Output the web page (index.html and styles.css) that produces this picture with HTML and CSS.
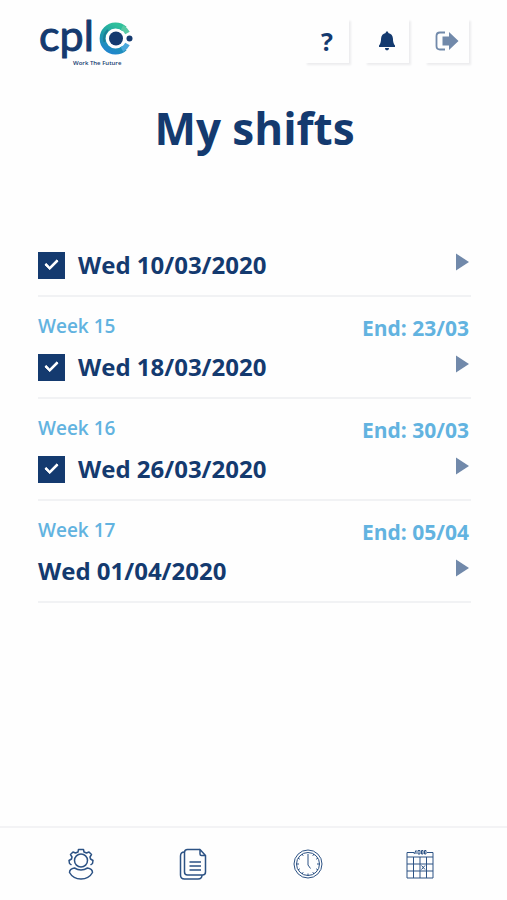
FILE: index.html
```html
<!DOCTYPE html>
<html lang="en">
<head>
<meta charset="utf-8">
<meta name="viewport" content="width=device-width, initial-scale=1">
<title>My shifts</title>
<link rel="stylesheet" href="styles.css">
</head>
<body>
<header class="topbar">
  <a class="logo" href="#" aria-label="cpl home">
    <svg width="96" height="64" viewBox="0 0 96 64">
      <defs>
        <linearGradient id="ring" x1="0.7" y1="0" x2="0.3" y2="1">
          <stop offset="0" stop-color="#2fc09b"/>
          <stop offset="0.5" stop-color="#1c9ba8"/>
          <stop offset="1" stop-color="#2086cc"/>
        </linearGradient>
      </defs>
      <text class="logo-name" x="1" y="47">cpl</text>
      <text class="logo-tag" x="35" y="61">Work The Future</text>
      <g transform="translate(0 1)">
        <path d="M86.500 24A13 13 0 1 0 86.500 43" fill="none" stroke="url(#ring)" stroke-width="6"/>
        <path d="M70 25A12 12 0 0 0 66.500 37" fill="none" stroke="#1a7f96" stroke-width="2"/>
        <path d="M84 22.500A13 13 0 0 1 89.500 28" fill="none" stroke="#58c9a4" stroke-width="5"/>
        <path d="M89.500 39A13 13 0 0 1 84 44.500" fill="none" stroke="#4ba8dc" stroke-width="5"/>
        <circle cx="78" cy="33.500" r="9.500" fill="#fefefe"/>
        <circle cx="78" cy="33.500" r="7" fill="#143a6f"/>
        <circle cx="91.500" cy="33.500" r="4.500" fill="#fefefe"/>
        <circle cx="91.500" cy="33.500" r="3" fill="#143a6f"/>
      </g>
    </svg>
  </a>
  <div class="actions">
    <button class="action" type="button">?</button>
    <button class="action" type="button" aria-label="Notifications">
      <svg width="18" height="20" viewBox="0 0 18 20" fill="currentColor">
        <path d="M9 0.500C8.200 0.500 7.700 1 7.700 1.900C5 2.500 3.200 4.500 3.100 7.200C3 11 2.500 12.600 1 14.500V16H17V14.500C15.500 12.600 15 11 14.900 7.200C14.800 4.500 13 2.500 10.300 1.900C10.300 1 9.800 0.500 9 0.500ZM7 17H11C11 18.400 10.200 19.300 9 19.300S7 18.400 7 17Z"/>
      </svg>
    </button>
    <button class="action action-muted" type="button" aria-label="Log out">
      <svg width="24" height="20" viewBox="0 0 24 20">
        <path d="M10 1.500H5C2.800 1.500 1.500 2.800 1.500 5V15C1.500 17.200 2.800 18.500 5 18.500H10" fill="none" stroke="currentColor" stroke-width="1.800"/>
        <path d="M7.500 5.500H14V1L23.500 10L14 19V14.500H7.500Z" fill="currentColor"/>
      </svg>
    </button>
  </div>
</header>

<main class="content">
  <h1 class="title">My shifts</h1>
  <ul class="shifts">
    <li class="shift">
      <div class="entry">
        <label class="day"><input class="check" type="checkbox" checked>Wed 10/03/2020</label>
        <button class="open" type="button" aria-label="Open shift"><svg width="14" height="18" viewBox="0 0 14 18"><path d="M1 0.500L14 9L1 17.500Z" fill="currentColor"/></svg></button>
      </div>
    </li>
    <li class="shift">
      <div class="meta"><span class="week">Week 15</span><span class="end">End: 23/03</span></div>
      <div class="entry">
        <label class="day"><input class="check" type="checkbox" checked>Wed 18/03/2020</label>
        <button class="open" type="button" aria-label="Open shift"><svg width="14" height="18" viewBox="0 0 14 18"><path d="M1 0.500L14 9L1 17.500Z" fill="currentColor"/></svg></button>
      </div>
    </li>
    <li class="shift">
      <div class="meta"><span class="week">Week 16</span><span class="end">End: 30/03</span></div>
      <div class="entry">
        <label class="day"><input class="check" type="checkbox" checked>Wed 26/03/2020</label>
        <button class="open" type="button" aria-label="Open shift"><svg width="14" height="18" viewBox="0 0 14 18"><path d="M1 0.500L14 9L1 17.500Z" fill="currentColor"/></svg></button>
      </div>
    </li>
    <li class="shift">
      <div class="meta"><span class="week">Week 17</span><span class="end">End: 05/04</span></div>
      <div class="entry">
        <span class="day">Wed 01/04/2020</span>
        <button class="open" type="button" aria-label="Open shift"><svg width="14" height="18" viewBox="0 0 14 18"><path d="M1 0.500L14 9L1 17.500Z" fill="currentColor"/></svg></button>
      </div>
    </li>
  </ul>
</main>

<nav class="tabs" aria-label="Main">
  <a class="tab" href="#" aria-label="Profile">
    <svg width="32" height="32" viewBox="0 0 32 32">
      <circle cx="16" cy="12.500" r="6.500"/>
      <path d="M6.500 17L4.500 15.500L4 12.500L6.500 11L7 9L5.500 6.500L8 4L10.500 5L13 4L13.500 1.500H18.500L19 4L21.500 5L24 4L26.500 6.500L25 9L25.500 11L28 12.500L27.500 15.500L25.500 17"/>
      <path d="M9.500 20C6.500 20.500 4.500 22.500 4.500 24.500C7 29 11 31 16 31S25 29 27.500 24.500C27.500 22.500 25.500 20.500 22.500 20C18.500 22.500 13.500 22.500 9.500 20Z"/>
    </svg>
  </a>
  <a class="tab" href="#" aria-label="Documents">
    <svg width="32" height="32" viewBox="0 0 32 32">
      <path d="M22 1.500H9.500C7.500 1.500 6.500 2.500 6.500 4.500V24C6.500 26 7.500 27 9.500 27H24.500C26.500 27 27.500 26 27.500 24V7.500L22 1.500V6C22 7.200 22.500 7.500 23.500 7.500H27.500"/>
      <path d="M6.500 4C3.500 4 2.500 5 2.500 8V27C2.500 30 3.500 31 6.500 31H20C23 31 24 30 24 27"/>
      <path d="M11.500 14H23M11.500 18H23M11.500 22H23"/>
    </svg>
  </a>
  <a class="tab" href="#" aria-label="Hours">
    <svg class="fine" width="32" height="32" viewBox="0 0 32 32">
      <circle cx="17" cy="16" r="14"/>
      <circle cx="17" cy="16" r="11.500"/>
      <path d="M17 6V17L19.500 20.500M17 25.500V27.500M5.500 16H8M26 16H28.500M11.200 6L12.200 7.800M22.800 6L21.800 7.800M7 10.200L8.800 11.200M27 10.200L25.200 11.200M7 21.800L8.800 20.800M27 21.800L25.200 20.800M11.200 26L12.200 24.200M22.800 26L21.800 24.200"/>
    </svg>
  </a>
  <a class="tab" href="#" aria-label="Calendar">
    <svg class="fine" width="32" height="32" viewBox="0 0 32 32">
      <path d="M10 4.500H3V30H29V4.500H23M3 9H29M3 16H29M3 23H29M9.500 9V30M16 9V30M22.500 9V30"/>
      <path d="M10 6L12 2.500V6M14 2.500H16V6H14ZM17.500 2.500H19V6H17.500ZM20.500 2.500H22V6H20.500Z"/>
      <path d="M17.500 17.500L21 21.500M21 17.500L17.500 21.500"/>
    </svg>
  </a>
</nav>
</body>
</html>
```
FILE: styles.css
```css
* {
  box-sizing: border-box;
}

body {
  margin: 0;
  min-height: 100vh;
  display: flex;
  flex-direction: column;
  background: #fefefe;
  color: #143a6f;
  font-family: "Open Sans", "Noto Sans", sans-serif;
}

button {
  padding: 0;
  border: 0;
  background: none;
  color: inherit;
  font: inherit;
}

svg {
  display: block;
}

.topbar {
  display: flex;
  justify-content: space-between;
  align-items: flex-start;
  padding: 4px 38px 0;
}

.logo svg {
  overflow: visible;
}

.logo-name {
  font: 43px Lato, sans-serif;
  fill: #143a6f;
  stroke: #143a6f;
  stroke-width: 1px;
  stroke-linejoin: round;
}

.logo-tag {
  font: 600 6px "Open Sans", sans-serif;
  fill: #143a6f;
}

.actions {
  display: flex;
  gap: 16px;
  padding-top: 15px;
}

.action {
  width: 44px;
  height: 44px;
  display: grid;
  place-items: center;
  box-shadow: 2px 2px 2px #ececee;
  font-size: 25px;
  font-weight: 700;
  line-height: 32px;
}

.action-muted,
.open {
  color: #7189aa;
}

.content {
  flex: 1;
  padding: 0 36px 0 38px;
}

.title {
  margin: 28px 0 79px;
  text-align: center;
  font-size: 44px;
  font-weight: 700;
  line-height: 64px;
}

.shifts {
  margin: 0;
  padding: 0;
  list-style: none;
}

.shift {
  border-bottom: 2px solid #f1f2f4;
}

.meta {
  display: flex;
  justify-content: space-between;
  height: 44px;
  padding: 15px 2px 0 0;
  color: #62b3e0;
}

.week {
  font-size: 19px;
  font-weight: 600;
  line-height: 28px;
}

.end {
  font-size: 21px;
  font-weight: 700;
  line-height: 32px;
}

.entry {
  display: flex;
  justify-content: space-between;
  align-items: flex-start;
  height: 56px;
  padding: 8px 2px 0 0;
}

.day {
  display: flex;
  align-items: center;
  gap: 13px;
  font-size: 24px;
  font-weight: 700;
  line-height: 36px;
}

.check {
  appearance: none;
  display: grid;
  place-items: center;
  width: 27px;
  height: 27px;
  margin: 0;
  background: #143a6f;
}

.check:checked::before {
  content: "";
  box-sizing: border-box;
  width: 13px;
  height: 8px;
  border: solid #fff;
  border-width: 0 0 3px 3px;
  border-radius: 1px;
  transform: translateY(-2px) rotate(-45deg);
}

.open {
  padding: 6px 0;
}

.tabs {
  display: flex;
  padding: 20px 30px 20px 24px;
  border-top: 2px solid #f3f3f5;
}

.tab {
  flex: 1;
  display: grid;
  place-items: center;
  color: #2c5284;
}

.tab svg {
  fill: none;
  stroke: currentColor;
  stroke-width: 1.5px;
  stroke-linejoin: round;
}

.tab .fine {
  stroke-width: 1px;
}
```
